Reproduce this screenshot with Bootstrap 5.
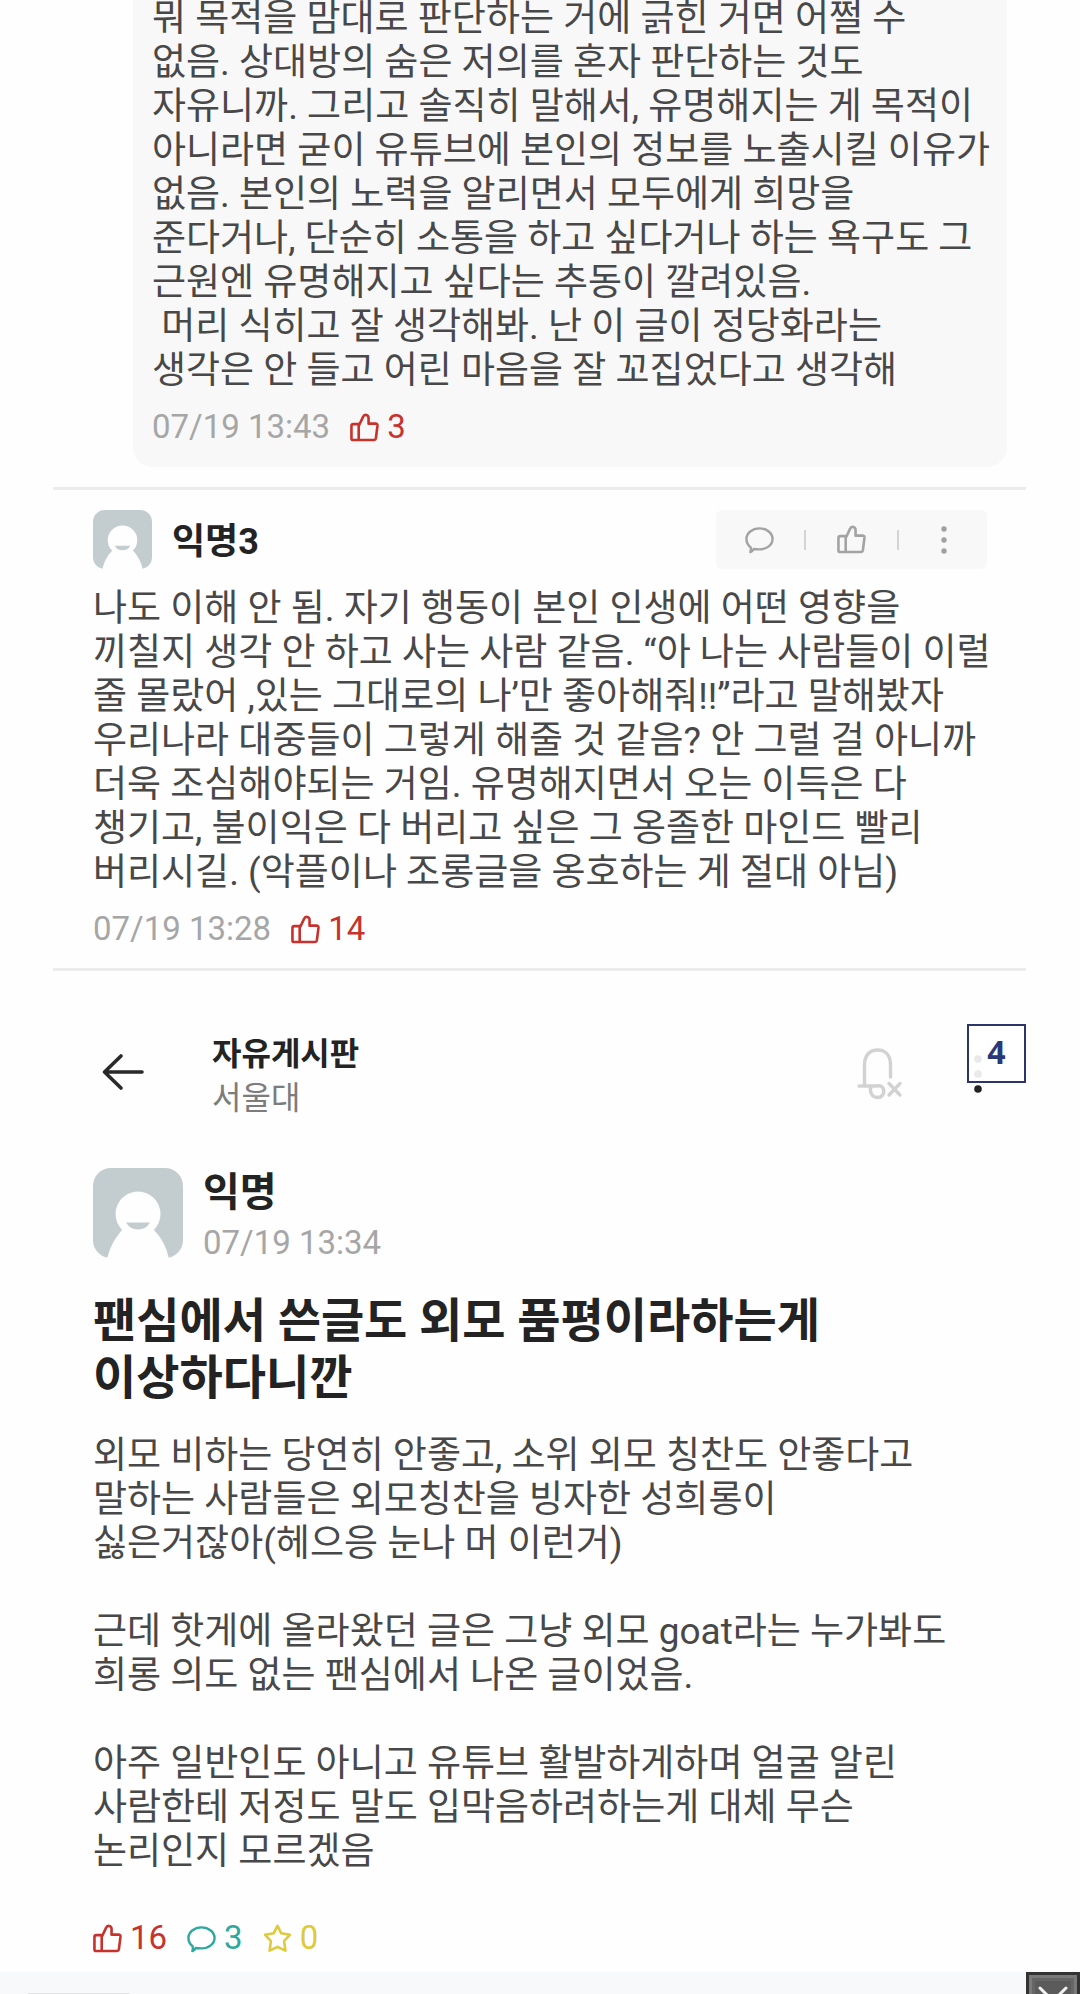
<!DOCTYPE html>
<html lang="ko">
<head>
<meta charset="utf-8">
<meta name="viewport" content="width=device-width, initial-scale=1">
<title>자유게시판</title>
<link href="https://cdn.jsdelivr.net/npm/bootstrap@5.3.0/dist/css/bootstrap.min.css" rel="stylesheet">
<style>
body{font-family:Roboto,"Noto Sans CJK KR",sans-serif;background:#fefefe;color:#484848;overflow-x:hidden}
.thread{padding:0 54px 0 53px}
.inset{padding:0 39px 0 40px}
.post-text{font-size:37px;line-height:44px;white-space:pre;margin:0}
.reply{background:#f8f8f8;border-radius:0 0 20px 20px;margin:0 19px 0 80px;padding:0 0 20px 19px}
.reply .post-text{margin-top:-3px}
.comment{padding-top:20px;padding-bottom:19px}
.comment .post-text{margin-top:18px}
.meta-row{margin-top:14px}
.stamp{font-size:33px;line-height:40px;color:#a6a6a6}
.like{color:#c8322d}.talk{color:#2fa8a0}.scrap{color:#dfc93c}
.tally{font-size:33px;line-height:40px}
.stats{gap:20px;margin:44px 0 14px}
.rule{border:0;border-top:3px solid #ececec;opacity:1;margin:0}
.rule-first{margin-top:20px}
.who{color:#232323;font-weight:700;font-size:36px;line-height:44px;padding-top:4px}
.who-lg{font-size:40px;line-height:50px;padding-top:0}
.stamp-lg{line-height:50px}
.tools{background:#f8f8f8;border-radius:6px;height:59px;width:271px;padding:0 20px;color:#a3a3a3}
.tools button,.bar button{background:none;border:0;padding:0;color:inherit;line-height:0}
.tools button{width:46px}
.tools i{width:2px;height:20px;background:#d4d4d4}
.bar{padding:53px 0 0 48px}
.bar-name{padding-left:19px}
.bar-title{font-size:32px;line-height:44px;color:#232323;font-weight:700}
.bar-sub{font-size:32px;line-height:44px;color:#7c7c7c}
.menu-slot{width:59px;height:69px}
.pagemark{left:0;top:0;width:59px;height:59px;border:2px solid #2b356b;background:rgba(255,255,255,.9);color:#2a3878;font:700 32px/52px "Open Sans",sans-serif}
.post-title{font-size:47px;line-height:57px;font-weight:700;color:#232323;margin:0}
.opening{margin-top:28px}
.tray{height:23px;background:#f8f9fb}
.tab-edge{width:102px;margin-left:28px;border:2px solid #e2e3e5;border-bottom:0;height:2px}
.shut{width:54px;height:60px;padding:11px 0 0;border:3px solid #333;background:#5b5b5b;box-shadow:inset 0 0 0 3px #7a7a7a,inset 0 0 0 6px #666;display:flex;justify-content:center}
svg{display:block;fill:none;stroke:currentColor;stroke-linecap:round;stroke-linejoin:round;flex:none}
</style>
<script src="https://cdn.jsdelivr.net/npm/bootstrap@5.3.0/dist/js/bootstrap.bundle.min.js"></script>
</head>
<body>
<svg width="0" height="0" class="position-absolute" aria-hidden="true">
  <symbol id="thumb" viewBox="0 0 30 30"><path d="M3.500 11.500H9V28H3.500Q1.500 28 1.500 26V13.500Q1.500 11.500 3.500 11.500ZM9 13.500L13.500 4Q14.500 1.500 16.800 2Q19.200 2.600 19.200 5V11H26.300Q28.600 11 28.400 13.400L26.800 26Q26.500 28 24.400 28H9" stroke-width="2.700"/></symbol>
  <symbol id="bubble" viewBox="0 0 30 30"><path d="M15 3.500C22.500 3.500 28.500 8.500 28.500 14.500S22.500 25.200 15 25.200C13 25.200 10.800 25.200 9 24.800Q8 27 5.500 28Q6.500 25.500 5.800 23C3 21 1.500 18 1.500 14.500C1.500 8.500 7.500 3.500 15 3.500Z" stroke-width="2.500"/></symbol>
  <symbol id="star" viewBox="0 0 30 30"><path d="M15 2L18.900 9.600L27.800 11.200L21.800 17.700L23.200 27.500L15 23.600L6.800 27.500L8.200 17.700L2.200 11.200L11.100 9.600Z" stroke-width="2.700"/></symbol>
  <symbol id="anon" viewBox="0 0 90 90"><rect width="90" height="90" rx="18" fill="#c3cdd0" stroke="none"/><circle cx="45" cy="46" r="22.500" fill="#fefefe" stroke="none"/><path d="M14 91C18 75 24 68 30 61H60C67 68 73 77 76 91Z" fill="#fefefe" stroke="none"/><path d="M33 54.500H57Q53 61.500 45 61.500T33 54.500Z" fill="#c3cdd0" stroke="none"/></symbol>
</svg>

<main>
<div class="thread">
  <article class="reply">
    <p class="post-text">뭐 목적을 맘대로 판단하는 거에 긁힌 거면 어쩔 수
없음. 상대방의 숨은 저의를 혼자 판단하는 것도
자유니까. 그리고 솔직히 말해서, 유명해지는 게 목적이
아니라면 굳이 유튜브에 본인의 정보를 노출시킬 이유가
없음. 본인의 노력을 알리면서 모두에게 희망을
준다거나, 단순히 소통을 하고 싶다거나 하는 욕구도 그
근원엔 유명해지고 싶다는 추동이 깔려있음.
 머리 식히고 잘 생각해봐. 난 이 글이 정당화라는
생각은 안 들고 어린 마음을 잘 꼬집었다고 생각해</p>
    <div class="meta-row d-flex align-items-center">
      <time class="stamp">07/19 13:43</time>
      <span class="like tally d-flex align-items-center ms-3 ps-1"><svg width="29" height="29"><use href="#thumb"/></svg><span class="ms-2">3</span></span>
    </div>
  </article>
  <hr class="rule rule-first">
  <article class="inset comment">
    <header class="d-flex align-items-center">
      <svg width="59" height="59"><use href="#anon"/></svg>
      <span class="who ms-3 ps-1 flex-grow-1">익명3</span>
      <div class="tools d-flex align-items-center justify-content-between">
        <button type="button" aria-label="댓글"><svg class="mx-auto" width="29" height="29"><use href="#bubble"/></svg></button><i></i>
        <button type="button" aria-label="공감"><svg class="mx-auto" width="29" height="29"><use href="#thumb"/></svg></button><i></i>
        <button type="button" aria-label="더보기"><svg class="mx-auto" width="8" height="30" viewBox="0 0 8 30"><g fill="#a0a0a0" stroke="none"><circle cx="4" cy="4" r="2.700"/><circle cx="4" cy="15" r="2.700"/><circle cx="4" cy="26" r="2.700"/></g></svg></button>
      </div>
    </header>
    <p class="post-text">나도 이해 안 됨. 자기 행동이 본인 인생에 어떤 영향을
끼칠지 생각 안 하고 사는 사람 같음. “아 나는 사람들이 이럴
줄 몰랐어 ,있는 그대로의 나’만 좋아해줘!!”라고 말해봤자
우리나라 대중들이 그렇게 해줄 것 같음? 안 그럴 걸 아니까
더욱 조심해야되는 거임. 유명해지면서 오는 이득은 다
챙기고, 불이익은 다 버리고 싶은 그 옹졸한 마인드 빨리
버리시길. (악플이나 조롱글을 옹호하는 게 절대 아님)</p>
    <div class="meta-row d-flex align-items-center">
      <time class="stamp">07/19 13:28</time>
      <span class="like tally d-flex align-items-center ms-3 ps-1"><svg width="29" height="29"><use href="#thumb"/></svg><span class="ms-2">14</span></span>
    </div>
  </article>
  <hr class="rule">

  <section>
    <header class="bar d-flex">
      <button type="button" aria-label="뒤로" class="align-self-center"><svg width="44" height="40" viewBox="0 0 44 40"><path d="M41 20H4M20 4L3.500 20L20 36" stroke="#292929" stroke-width="3.600"/></svg></button>
      <div class="bar-name ms-5 flex-grow-1 mt-2">
        <div class="bar-title">자유게시판</div>
        <div class="bar-sub">서울대</div>
      </div>
      <button type="button" aria-label="알림 끄기" class="align-self-start mt-4 me-5"><svg width="46" height="52" viewBox="0 0 46 52"><path d="M2 38H19M7.500 38V17C7.500 7 13 2 20.500 2S33.500 7 33.500 17V29M14 38C12 44 15 49.500 20.500 49.500S28 44 26 40Q24 37 19 38M32 35.500L43 47M43 35.500L32 47" stroke="#d2d2d2" stroke-width="3.400"/></svg></button>
      <div class="menu-slot position-relative ms-3">
        <button type="button" aria-label="메뉴" class="ms-1 mt-4 pt-1"><svg width="14" height="44" viewBox="0 0 14 44"><g fill="#222" stroke="none"><circle cx="7" cy="7" r="3.800"/><circle cx="7" cy="22" r="3.800"/><circle cx="7" cy="37" r="3.800"/></g></svg></button>
        <div class="pagemark position-absolute text-center">4</div>
      </div>
    </header>
    <div class="inset">
      <div class="d-flex align-items-start mt-5">
        <svg width="90" height="90"><use href="#anon"/></svg>
        <div class="ms-3 ps-1"><div class="who who-lg">익명</div><time class="stamp stamp-lg d-block">07/19 13:34</time></div>
      </div>
      <h1 class="post-title mt-4">팬심에서 쓴글도 외모 품평이라하는게<br>이상하다니깐</h1>
      <p class="post-text opening">외모 비하는 당연히 안좋고, 소위 외모 칭찬도 안좋다고
말하는 사람들은 외모칭찬을 빙자한 성희롱이
싫은거잖아(헤으응 눈나 머 이런거)

근데 핫게에 올라왔던 글은 그냥 외모 goat라는 누가봐도
희롱 의도 없는 팬심에서 나온 글이었음.

아주 일반인도 아니고 유튜브 활발하게하며 얼굴 알린
사람한테 저정도 말도 입막음하려하는게 대체 무슨
논리인지 모르겠음</p>
      <div class="tally stats d-flex align-items-center">
        <span class="like d-flex align-items-center"><svg width="29" height="29"><use href="#thumb"/></svg><span class="ms-2">16</span></span>
        <span class="talk d-flex align-items-center"><svg width="29" height="29"><use href="#bubble"/></svg><span class="ms-2">3</span></span>
        <span class="scrap d-flex align-items-center"><svg width="29" height="29"><use href="#star"/></svg><span class="ms-2">0</span></span>
      </div>
    </div>
  </section>
</div>
</main>
<footer class="tray d-flex justify-content-between align-items-start overflow-hidden">
  <div class="tab-edge align-self-end"></div>
  <button type="button" class="shut" aria-label="닫기"><svg width="30" height="30" viewBox="0 0 30 30"><path d="M2 2L28 28M28 2L2 28" stroke="#f2f2f2" stroke-width="3"/></svg></button>
</footer>
</body>
</html>
